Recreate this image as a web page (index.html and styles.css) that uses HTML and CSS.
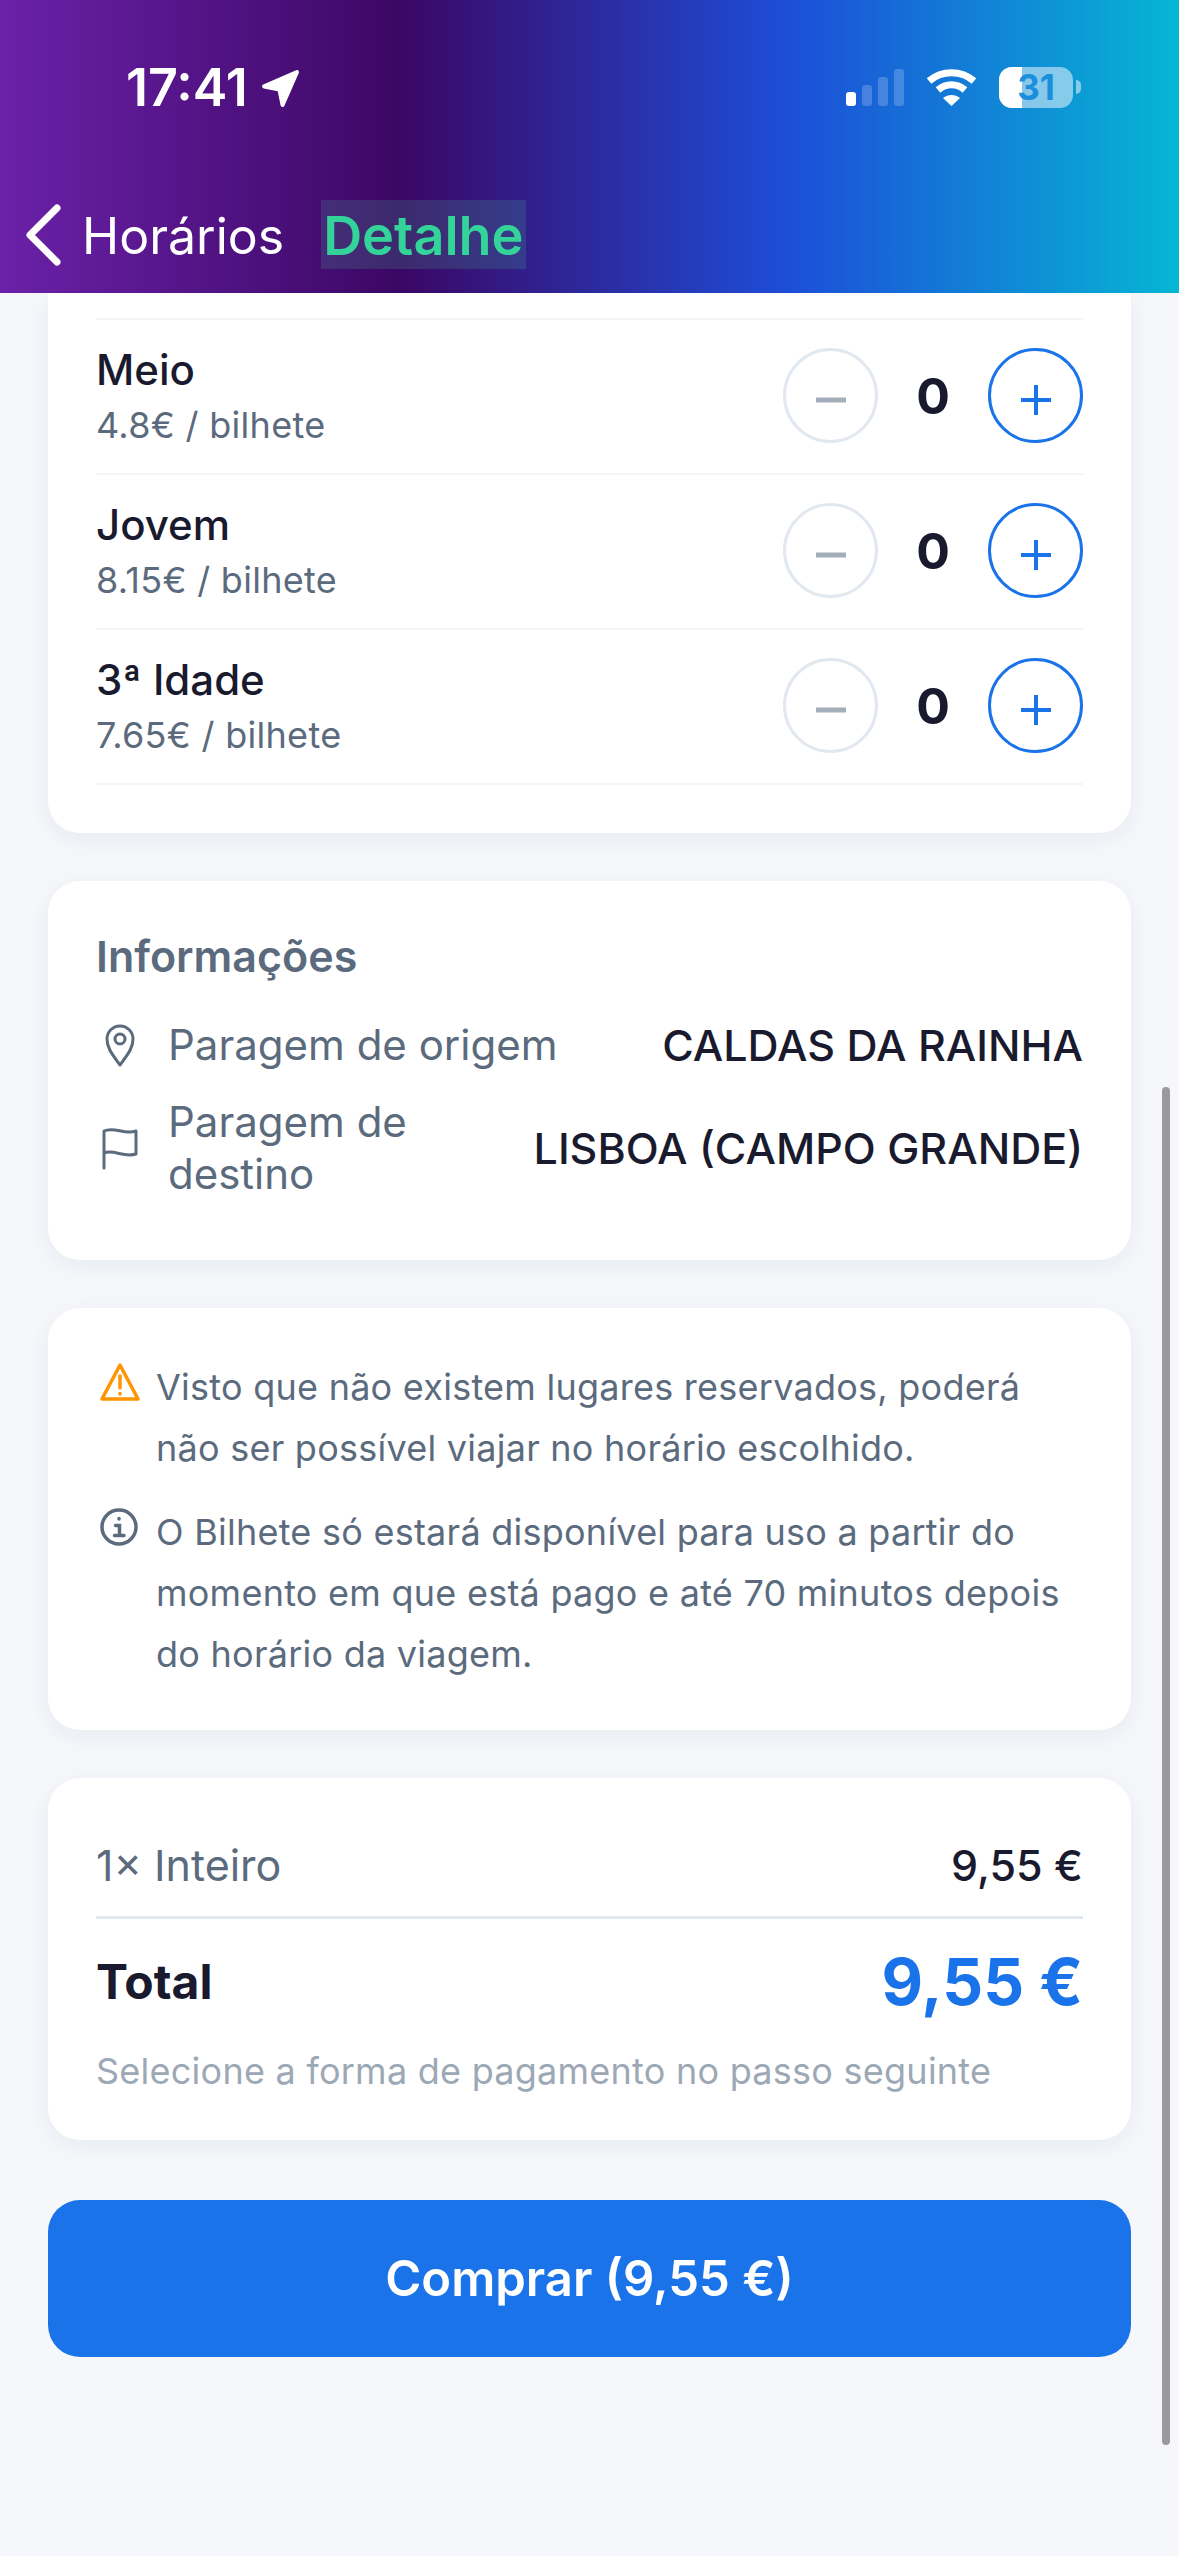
FILE: index.html
```html
<!DOCTYPE html>
<html lang="pt">
<head>
    <meta charset="UTF-8">
    <meta name="viewport" content="width=device-width, initial-scale=1.0">
    <title>Detalhe</title>
    <link rel="stylesheet" href="styles.css">
</head>
<body>
    <header class="top-bar">
        <div class="status-bar">
            <div class="status-time">
                <span>17:41</span>
                <svg class="location-icon" viewBox="0 0 40 40"><path d="M36 4 L22 36 L19 21 L4 18 Z" fill="#fff" stroke="#fff" stroke-width="4" stroke-linejoin="round"/></svg>
            </div>
            <div class="status-icons">
                <div class="signal">
                    <span class="bar bar-1"></span>
                    <span class="bar bar-2"></span>
                    <span class="bar bar-3"></span>
                    <span class="bar bar-4"></span>
                </div>
                <svg class="wifi-icon" viewBox="0 0 51 37" fill="none" stroke="#fff" stroke-width="7"><path d="M3 12 C16 1 35 1 48 12"/><path d="M12 21 C20 14 31 14 39 21"/><path d="M25.500 37 L17 29 C22 25 29 25 34 29 Z" fill="#fff" stroke="none"/></svg>
                <div class="battery">
                    <span class="battery-fill"></span>
                    <span class="battery-level">31</span>
                </div>
                <span class="battery-nub"></span>
            </div>
        </div>
        <nav class="nav-bar">
            <svg class="back-icon" viewBox="0 0 36 62" fill="none" stroke="#fff" stroke-width="7" stroke-linecap="round" stroke-linejoin="round"><path d="M32 4 L5 31 L32 58"/></svg>
            <span class="nav-back">Horários</span>
            <span class="nav-title">Detalhe</span>
        </nav>
    </header>

    <main class="content">
        <section class="card card-tickets">
            <div class="ticket-row">
                <div>
                    <div class="ticket-name">Meio</div>
                    <div class="ticket-price">4.8€ / bilhete</div>
                </div>
                <div class="stepper">
                    <span class="step-btn step-minus"><svg viewBox="0 0 30 30"><path d="M0 15 H30" stroke="#a3aebb" stroke-width="5"/></svg></span>
                    <span class="step-count">0</span>
                    <span class="step-btn step-plus"><svg viewBox="0 0 30 30"><path d="M0 15 H30 M15 0 V30" stroke="#1a73e8" stroke-width="4"/></svg></span>
                </div>
            </div>
            <div class="ticket-row">
                <div>
                    <div class="ticket-name">Jovem</div>
                    <div class="ticket-price">8.15€ / bilhete</div>
                </div>
                <div class="stepper">
                    <span class="step-btn step-minus"><svg viewBox="0 0 30 30"><path d="M0 15 H30" stroke="#a3aebb" stroke-width="5"/></svg></span>
                    <span class="step-count">0</span>
                    <span class="step-btn step-plus"><svg viewBox="0 0 30 30"><path d="M0 15 H30 M15 0 V30" stroke="#1a73e8" stroke-width="4"/></svg></span>
                </div>
            </div>
            <div class="ticket-row">
                <div>
                    <div class="ticket-name">3ª Idade</div>
                    <div class="ticket-price">7.65€ / bilhete</div>
                </div>
                <div class="stepper">
                    <span class="step-btn step-minus"><svg viewBox="0 0 30 30"><path d="M0 15 H30" stroke="#a3aebb" stroke-width="5"/></svg></span>
                    <span class="step-count">0</span>
                    <span class="step-btn step-plus"><svg viewBox="0 0 30 30"><path d="M0 15 H30 M15 0 V30" stroke="#1a73e8" stroke-width="4"/></svg></span>
                </div>
            </div>
        </section>

        <section class="card card-info">
            <h2 class="info-title">Informações</h2>
            <div class="info-row">
                <svg class="info-icon" viewBox="0 0 36 44" fill="none" stroke="#5b6b7d" stroke-width="3" stroke-linejoin="round"><path d="M18 42 C10 31 5 25 5 16 A13 13 0 0 1 31 16 C31 25 26 31 18 42 Z"/><circle cx="18" cy="16" r="5"/></svg>
                <span class="info-label">Paragem de origem</span>
                <span class="info-value">CALDAS DA RAINHA</span>
            </div>
            <div class="info-row">
                <svg class="info-icon" viewBox="0 0 36 44" fill="none" stroke="#5b6b7d" stroke-width="3" stroke-linecap="round" stroke-linejoin="round"><path d="M2 42 V5 C12 0 22 9 34 5 V28 C22 32 12 23 2 27"/></svg>
                <span class="info-label">Paragem de destino</span>
                <span class="info-value">LISBOA (CAMPO GRANDE)</span>
            </div>
        </section>

        <section class="card card-notes">
            <div class="note">
                <svg class="note-icon" viewBox="0 0 40 38" fill="none" stroke="#ff9500" stroke-width="3.500" stroke-linejoin="round" stroke-linecap="round"><path d="M20 2 L38 36 H2 Z"/><path d="M20 13 V25"/><path d="M20 30.500 V31"/></svg>
                <p>Visto que não existem lugares reservados, poderá não ser possível viajar no horário escolhido.</p>
            </div>
            <div class="note">
                <svg class="note-icon" viewBox="0 0 40 38" fill="none" stroke="#5b6b7d" stroke-width="3.500" stroke-linecap="round"><circle cx="19" cy="19" r="17"/><path d="M15.500 17.500 H19.500 V27.500 M14.500 27.500 H24"/><path d="M19 10.500 V11"/></svg>
                <p>O Bilhete só estará disponível para uso a partir do momento em que está pago e até 70 minutos depois do horário da viagem.</p>
            </div>
        </section>

        <section class="card card-summary">
            <div class="summary-line">
                <span class="summary-label">1× Inteiro</span>
                <span class="summary-value">9,55 €</span>
            </div>
            <div class="summary-total">
                <span class="total-label">Total</span>
                <span class="total-value">9,55 €</span>
            </div>
            <p class="summary-hint">Selecione a forma de pagamento no passo seguinte</p>
        </section>

        <a class="buy-button" href="#">Comprar (9,55 €)</a>
    </main>

    <div class="scroll-thumb"></div>
</body>
</html>
```

FILE: styles.css
```css
* { box-sizing: border-box; }

body { margin: 0; height: 2556px; overflow: hidden; position: relative; font-family: Inter, "Noto Sans", sans-serif; background-color: #f5f7fb; color: #1a1a2e; }

.top-bar { height: 293px; background: linear-gradient(90deg, #6b21a8 0%, #3b0764 34%, #1d4ed8 67%, #06b6d4 100%); color: #fff; position: relative; z-index: 2; }

.status-bar { height: 192px; padding: 60px 98px 0 126px; display: flex; justify-content: space-between; align-items: flex-start; }
.status-time { display: flex; align-items: center; gap: 12px; font-size: 52px; font-weight: 600; line-height: 56px; }
.location-icon { width: 41px; height: 41px; }
.status-icons { display: flex; align-items: flex-end; height: 48px; }
.signal { display: flex; align-items: flex-end; gap: 6px; margin-right: 22px; margin-bottom: 2px; }
.bar { width: 10px; border-radius: 3px; background-color: rgba(255,255,255,0.2); }
.bar-1 { height: 14px; background-color: #fff; }
.bar-2 { height: 21px; }
.bar-3 { height: 29px; }
.bar-4 { height: 37px; }
.wifi-icon { width: 51px; height: 37px; margin-right: 22px; margin-bottom: 2px; }
.battery { width: 74px; height: 41px; border-radius: 13px; background-color: rgba(255,255,255,0.5); position: relative; overflow: hidden; text-align: center; }
.battery-fill { position: absolute; left: 0; top: 0; bottom: 0; width: 23px; background-color: #fff; }
.battery-level { position: relative; font-size: 35px; font-weight: 700; line-height: 41px; color: #1a8fdb; }
.battery-nub { width: 5px; height: 14px; margin: 0 0 14px 3px; border-radius: 0 5px 5px 0; background-color: rgba(255,255,255,0.5); }

.nav-bar { display: flex; align-items: center; padding-left: 25px; height: 85px; }
.back-icon { width: 36px; height: 62px; }
.nav-back { font-size: 50px; margin-left: 21px; padding-top: 2px; }
.nav-title { font-size: 54px; font-weight: 600; color: #34d399; margin-left: 37px; padding: 0 2px; height: 69px; line-height: 71px; background-color: rgba(70,211,153,0.17); }

.content { padding: 0 48px; display: flex; flex-direction: column; gap: 48px; }

.card { background-color: #fff; border-radius: 32px; padding: 0 48px; box-shadow: 0 6px 24px rgba(20,30,60,0.06); }

.card-tickets { height: 540px; padding-top: 25px; border-radius: 0 0 32px 32px; }
.ticket-row { height: 155px; padding-bottom: 2px; display: flex; justify-content: space-between; align-items: center; border-top: 2px solid #f3f5f9; }
.ticket-row:last-child { height: 157px; border-bottom: 2px solid #f3f5f9; }
.ticket-name { font-size: 42px; font-weight: 500; line-height: 52px; margin-bottom: 6px; }
.ticket-price { font-size: 36px; line-height: 46px; letter-spacing: 0.3px; color: #5b6b7d; }
.stepper { display: flex; align-items: center; }
.step-btn { width: 95px; height: 95px; border-radius: 50%; border: 3px solid #e2e8f0; display: flex; align-items: center; justify-content: center; }
.step-btn svg { width: 30px; height: 30px; margin-top: 9px; }
.step-plus { border-color: #1a73e8; }
.step-count { width: 110px; text-align: center; font-size: 50px; font-weight: 700; }

.card-info { height: 379px; padding-top: 47px; }
.info-title { margin: 0 0 35px; font-size: 43px; font-weight: 600; line-height: 56px; color: #5b6b7d; }
.info-row { display: flex; align-items: center; margin-bottom: 25px; }
.info-icon { width: 36px; height: 44px; flex-shrink: 0; margin: 0 30px 0 6px; }
.info-label { font-size: 42px; line-height: 52px; color: #5b6b7d; flex: 1; }
.info-value { font-size: 43px; font-weight: 500; line-height: 52px; text-align: right; white-space: nowrap; margin-left: 30px; }

.card-notes { height: 422px; padding-top: 49px; }
.note { display: flex; margin-bottom: 23px; }
.note-icon { width: 40px; height: 38px; flex-shrink: 0; margin: 6px 16px 0 4px; }
.note p { margin: 0; font-size: 36px; line-height: 61px; letter-spacing: 0.25px; color: #5b6b7d; }

.card-summary { height: 362px; padding-top: 57px; }
.summary-line { display: flex; justify-content: space-between; align-items: center; height: 60px; margin-bottom: 21px; }
.summary-label { font-size: 43px; color: #5b6b7d; }
.summary-value { font-size: 43px; font-weight: 500; }
.summary-total { display: flex; justify-content: space-between; align-items: center; height: 105px; padding-top: 23px; border-top: 3px solid #e2e8f0; }
.total-label { font-size: 48px; font-weight: 700; }
.total-value { font-size: 64px; font-weight: 700; color: #1a73e8; }
.summary-hint { margin: 27px 0 0; font-size: 36px; line-height: 46px; letter-spacing: 0.25px; color: #9ca8b5; }

.buy-button { display: flex; align-items: center; justify-content: center; height: 157px; margin-top: 12px; border-radius: 32px; background-color: #1a73e8; color: #fff; font-size: 49px; font-weight: 600; text-decoration: none; }

.scroll-thumb { position: absolute; left: 1162px; top: 1087px; width: 8px; height: 1358px; border-radius: 4px; background-color: #9a9a9e; }
```
